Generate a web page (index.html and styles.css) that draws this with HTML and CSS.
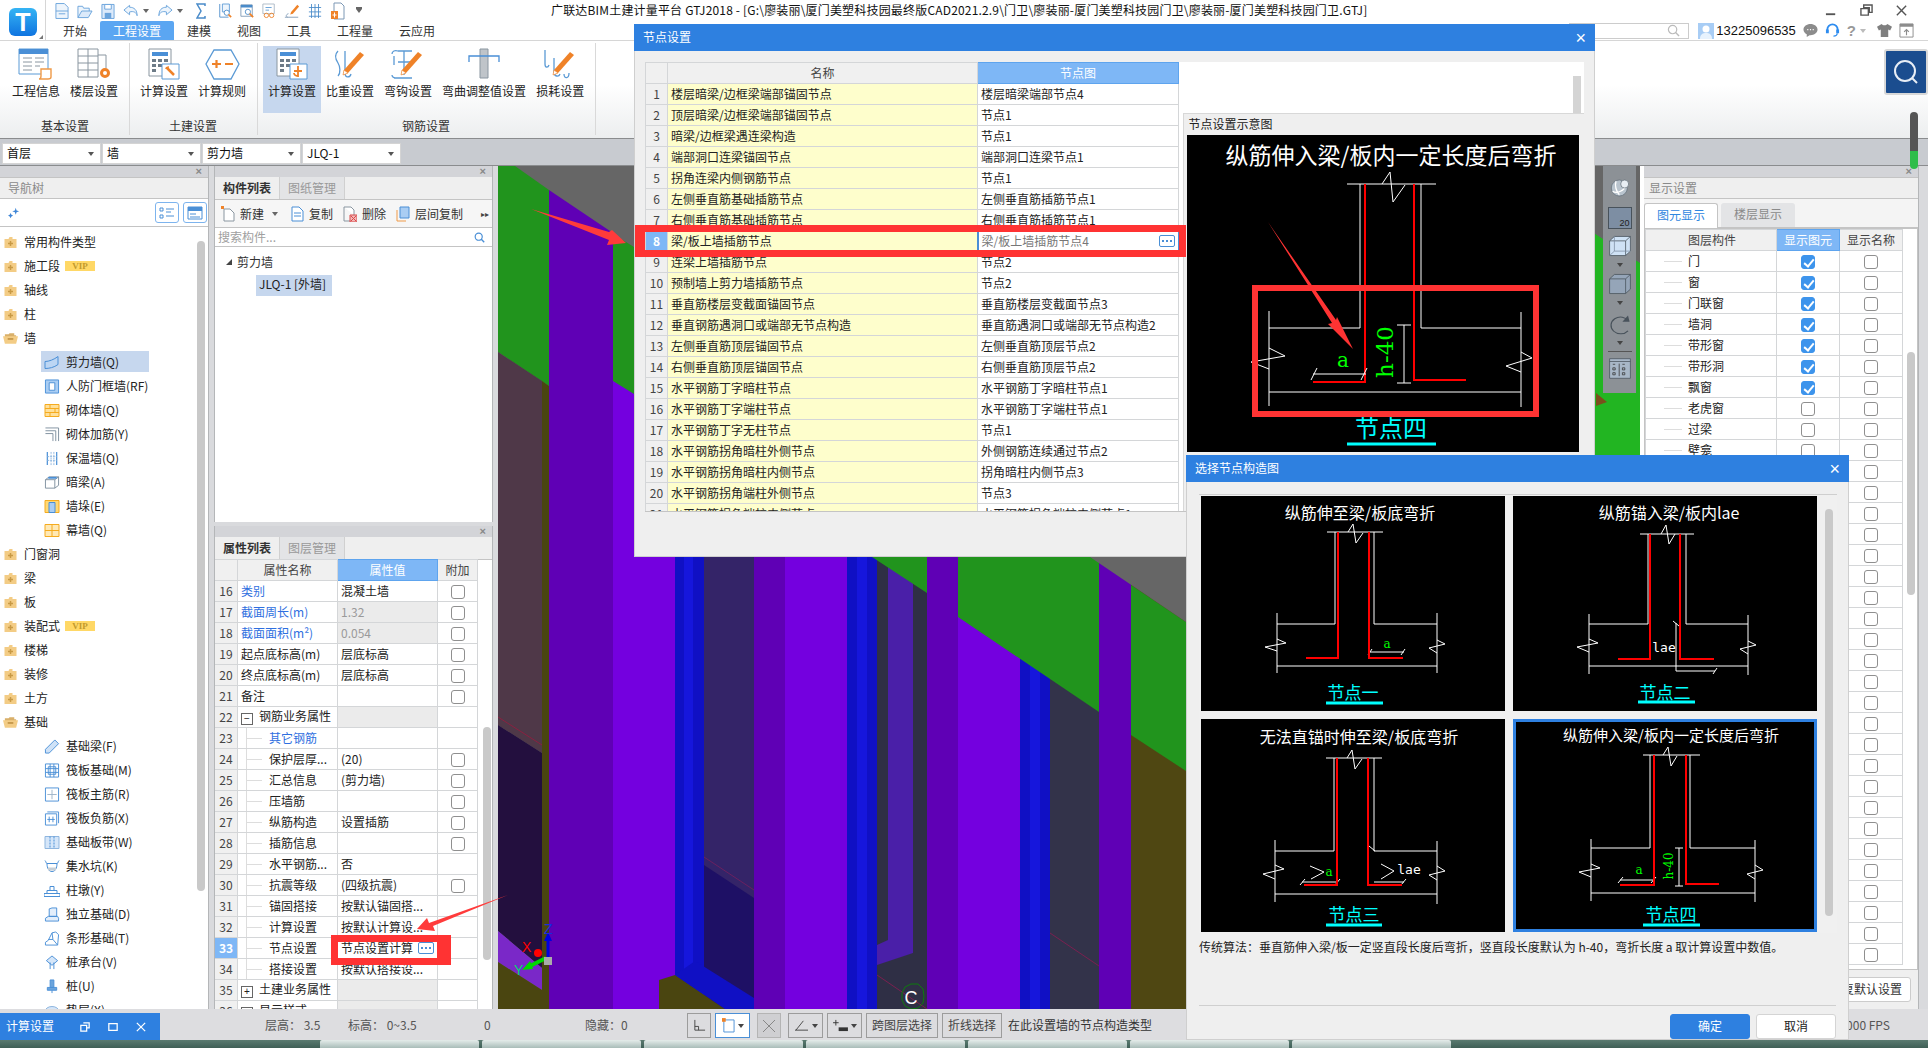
FILE: index.html

```html
<!DOCTYPE html>
<html lang="zh">
<head>
    <meta charset="utf-8">
    <title>广联达BIM土建计量平台 GTJ2018</title>
    <link rel="stylesheet" href="styles.css">
</head>
<body>

<svg class="sprite" width="0" height="0">
    <symbol id="folder" viewBox="0 0 14 13"><path d="M1 3h4l1-2h3v2h4v9H1z" fill="#f3cc85"/><path d="M7 5v5M4.500 7.500h5" stroke="#c99a45" stroke-width="1.500"/></symbol>
    <symbol id="folder-open" viewBox="0 0 16 13"><path d="M2 2h4l1-1h5v2h2v2H2z" fill="#d9b06a"/><path d="M0 4h16l-2 8H2z" fill="#f3cc85"/><path d="M5 7h6" stroke="#b98a3a" stroke-width="1.500"/></symbol>
    <symbol id="pencil" viewBox="0 0 34 32"><path d="M27 4l4 3-16 18-5 2 1-5z" fill="#ef8228"/><path d="M10 27l1-5 4 3z" fill="#fff" stroke="#ef8228" stroke-width=".6"/></symbol>
    <symbol id="wall-hook" viewBox="0 0 34 32"><path d="M5 3c-4 4-2 9 0 12s3 10 0 13M12 3v22c0 5 5 5 6 1" fill="none" stroke="#5b9ad5" stroke-width="1.300"/></symbol>
</svg>

<div class="app">
    <div class="top">
        <div class="logo-cell">
            <div class="logo">T</div>
            <i class="logo-corner"></i>
        </div>
        <div class="top-right">
            <div class="titlebar">
                <div class="quick">
                    <svg class="q" viewBox="0 0 15 18"><path d="M1 1h9l4 4v12H1z" fill="#eef5fc" stroke="#6ba4dc"/><path d="M1 9h13M4 12h7" stroke="#6ba4dc"/></svg>
                    <svg class="q qw" viewBox="0 0 17 18"><path d="M1 16V4h5l1 2h6v3" fill="#eef5fc" stroke="#6ba4dc"/><path d="M1 16l4-7h11l-4 7z" fill="#dceafa" stroke="#6ba4dc"/></svg>
                    <svg class="q" viewBox="0 0 15 18"><path d="M1 2h13v15H1z" fill="#dceafa" stroke="#6ba4dc"/><path d="M4 2h7v5H4z" fill="#fff" stroke="#6ba4dc"/><path d="M4 11h7v6H4z" fill="#6ba4dc"/></svg>
                    <svg class="q qw" viewBox="0 0 17 18"><path d="M7 3L1 8l6 5v-3c4-1 7 0 8 4 0-6-3-9-8-9z" fill="#eef5fc" stroke="#6ba4dc"/></svg>
                    <i class="caret"></i>
                    <svg class="q qw" viewBox="0 0 17 18"><path d="M10 3l6 5-6 5v-3c-4-1-7 0-8 4 0-6 3-9 8-9z" fill="#eef5fc" stroke="#6ba4dc"/></svg>
                    <i class="caret"></i>
                    <svg class="q qs" viewBox="0 0 10 18"><path d="M9 4V2H1l4 7-4 7h8v-2" fill="none" stroke="#4a8bc9" stroke-width="1.500"/></svg>
                    <svg class="q" viewBox="0 0 16 18"><path d="M2 1v15h10" fill="none" stroke="#4a8bc9"/><path d="M5 1h8v9H5z" fill="#eef5fc" stroke="#5b9ad5"/><circle cx="10" cy="11" r="3" fill="#fff" stroke="#4a8bc9"/><path d="M12 13l3 3" stroke="#ef8228" stroke-width="2"/></svg>
                    <svg class="q" viewBox="0 0 16 18"><path d="M1 2h13v13H1z" fill="#fff" stroke="#7d98b5"/><path d="M1 2h13v3H1z" fill="#4a8bc9"/><circle cx="9" cy="10" r="3" fill="#fff" stroke="#4a8bc9"/><path d="M11 12l4 4" stroke="#ef8228" stroke-width="2"/></svg>
                    <svg class="q" viewBox="0 0 16 18"><path d="M1 1h13v11H1z" fill="#fff" stroke="#a8b6c2"/><path d="M4 5h7M4 8h4" stroke="#5b9ad5"/><circle cx="5" cy="14" r="2.500" fill="none" stroke="#ef8228"/><circle cx="11" cy="14" r="2.500" fill="none" stroke="#ef8228"/></svg>
                    <svg class="q qw" viewBox="0 0 18 18"><path d="M8 10l7-8 2 2-7 8-3 1z" fill="#ef8228"/><path d="M1 16h15" stroke="#7d98b5"/><path d="M5 12c-3 1-3 3-1 4" fill="none" stroke="#7d98b5"/></svg>
                    <svg class="q" viewBox="0 0 16 18"><path d="M1 5h14M1 10h14M1 15h14M4 1v16M8 1v16M12 1v16" stroke="#4a8bc9" fill="none"/></svg>
                    <svg class="q qn" viewBox="0 0 14 18"><path d="M3 1h7l3 3v13H3z" fill="#fff" stroke="#7d98b5"/><path d="M0 9h7v8H0z" fill="#ef8228"/><path d="M3.500 10.500v5M1.500 13h4" stroke="#fff"/></svg>
                    <i class="caret caret-line"></i>
                </div>
                <div class="title-text">广联达BIM土建计量平台 GTJ2018 - [G:\廖装丽\厦门美塑科技园最终版CAD2021.2.9\门卫\廖装丽-厦门美塑科技园门卫\廖装丽-厦门美塑科技园门卫.GTJ]</div>
                <div class="win-btns">
                    <svg viewBox="0 0 14 14"><path d="M1 10h10v2H1z" fill="#555"/></svg>
                    <svg viewBox="0 0 14 14"><path d="M4 1h9v8H10V4H4z" fill="none" stroke="#555" stroke-width="1.500"/><path d="M1 5h8v7H1z" fill="none" stroke="#555" stroke-width="1.500"/></svg>
                    <svg viewBox="0 0 14 14"><path d="M2 2l10 10M12 2L2 12" stroke="#555" stroke-width="1.500"/></svg>
                </div>
            </div>
            <nav class="menu">
                <span>开始</span>
                <span class="active">工程设置</span>
                <span>建模</span>
                <span>视图</span>
                <span>工具</span>
                <span>工程量</span>
                <span>云应用</span>
                <div class="user-row">
                    <div class="help-search">
                        <svg viewBox="0 0 14 14" width="13" height="13"><circle cx="6" cy="6" r="4.500" fill="none" stroke="#bbb" stroke-width="1.300"/><path d="M9 9l4 4" stroke="#bbb" stroke-width="1.500"/></svg>
                    </div>
                    <svg class="avatar" viewBox="0 0 16 16"><path d="M0 0h16v16H0z" fill="#a8cdf5"/><circle cx="8" cy="6" r="3.500" fill="#fff"/><path d="M2 16c0-5 3-6 6-6s6 1 6 6z" fill="#e7f2fd"/></svg>
                    <span class="phone">13225096535</span>
                    <svg class="u-icon" viewBox="0 0 16 16"><path d="M8 1c4 0 7.500 2.500 7.500 6S12 13 8 13H7l-3 2v-3C2 11 .5 9.500.5 7 .5 3.500 4 1 8 1z" fill="#8c8c8c"/><path d="M4.500 7h1.200M7.400 7h1.200M10.300 7h1.200" stroke="#fff" stroke-width="1.200"/></svg>
                    <svg class="u-icon" viewBox="0 0 16 16"><path d="M2.500 10V7a5.500 5.500 0 0111 0v3" fill="none" stroke="#2d8cf0" stroke-width="2"/><path d="M1 7h3v4H1zM12 7h3v4h-3z" fill="#2d8cf0"/><path d="M13 11c0 2-2 3-4 3" fill="none" stroke="#2d8cf0" stroke-width="1.300"/></svg>
                    <span class="help-mark">?</span><i class="caret caret-pale"></i>
                    <svg class="u-icon" viewBox="0 0 16 16"><path d="M5 1L0 4l2 4 2-1v8h8V7l2 1 2-4-5-3c-1 2-5 2-6 0z" fill="#7f7f7f"/></svg>
                    <svg class="u-icon" viewBox="0 0 16 16"><path d="M1 1h14v14H1z" fill="#fff" stroke="#8c8c8c"/><path d="M1 1h14v3H1z" fill="#8c8c8c"/><path d="M8 13V7M5.500 9.500L8 7l2.500 2.500" fill="none" stroke="#8c8c8c" stroke-width="1.200"/></svg>
                </div>
            </nav>
        </div>
    </div>

    <div class="ribbon">
        <section class="rgroup">
            <div class="ritems">
                <div class="ritem">
                    <svg viewBox="0 0 36 32"><path d="M1 1h29v25H1z" fill="#fff" stroke="#5b9ad5"/><path d="M1 1h29v5H1z" fill="#4a8fd6"/><path d="M5 10h9M5 14h9M5 18h9M5 22h9M17 10h9M17 14h9M17 18h5" stroke="#8a96a0"/><path d="M23 21h10v8c0 2-2 2-3 2h-9c1 0 2-1 2-3z" fill="#fff" stroke="#ef9a48" stroke-width="1.400"/></svg>
                    <span>工程信息</span>
                </div>
                <div class="ritem">
                    <svg viewBox="0 0 36 32"><path d="M2 1h20v28H2zM2 8h20M2 15h20M2 22h20M12 1v28" fill="#fff" stroke="#8a96a0"/><path d="M22 7h8v13" fill="none" stroke="#8a96a0"/><circle cx="29" cy="25" r="3.500" fill="#fff" stroke="#ef8228" stroke-width="3"/></svg>
                    <span>楼层设置</span>
                </div>
            </div>
            <div class="rlabel">基本设置</div>
        </section>
        <section class="rgroup">
            <div class="ritems">
                <div class="ritem">
                    <svg viewBox="0 0 36 32"><path d="M3 1h22v27H3z" fill="#fff" stroke="#8a96a0"/><path d="M6 4h16v4H6z" fill="#4a8fd6"/><path d="M6 11h4v3H6zM12 11h4v3h-4zM18 11h4v3h-4zM6 16h4v3H6zM12 16h4v3h-4zM6 21h4v3H6z" fill="#6d7b87"/><path d="M16 16h17v15H16z" fill="#fff" stroke="#5b9ad5"/><path d="M21 20l7 7" stroke="#ef8228" stroke-width="2.500"/><path d="M20 21c0-2 2-2 3-2" stroke="#ef8228" fill="none" stroke-width="1.500"/></svg>
                    <span>计算设置</span>
                </div>
                <div class="ritem">
                    <svg viewBox="0 0 36 32"><path d="M10 2h17l8 14-8 15H10L2 16z" fill="#fff" stroke="#5b9ad5" stroke-width="1.300"/><path d="M8 16h9M12.500 12v8M21 16h8" stroke="#ef8228" stroke-width="2.200"/></svg>
                    <span>计算规则</span>
                </div>
            </div>
            <div class="rlabel">土建设置</div>
        </section>
        <section class="rgroup">
            <div class="ritems">
                <div class="ritem selected">
                    <svg viewBox="0 0 36 32"><path d="M3 1h22v27H3z" fill="#fff" stroke="#8a96a0"/><path d="M6 4h16v4H6z" fill="#4a8fd6"/><path d="M6 11h4v3H6zM12 11h4v3h-4zM18 11h4v3h-4zM6 16h4v3H6zM12 16h4v3h-4zM6 21h4v3H6z" fill="#6d7b87"/><path d="M16 16h17v15H16z" fill="#fff" stroke="#5b9ad5"/><path d="M24 18v10c-3 0-4-2-4-3M20 23h8" fill="none" stroke="#ef8228" stroke-width="1.800"/></svg>
                    <span>计算设置</span>
                </div>
                <div class="ritem">
                    <svg viewBox="0 0 36 32"><use href="#wall-hook"/><use href="#pencil"/></svg>
                    <span>比重设置</span>
                </div>
                <div class="ritem">
                    <svg viewBox="0 0 36 32"><path d="M2 6c0-3 3-4 6-3h14M4 30h18M14 3v24M8 14h14M2 27c0 3 3 3 5 3M4 17V8" fill="none" stroke="#5b9ad5" stroke-width="1.300"/><use href="#pencil"/></svg>
                    <span>弯钩设置</span>
                </div>
                <div class="ritem">
                    <svg viewBox="0 0 36 32"><path d="M14 1h8v29h-8z" fill="#bfc4c9" stroke="#8a96a0"/><path d="M3 14V8h30v6" fill="none" stroke="#4a8fd6" stroke-width="1.300"/></svg>
                    <span>弯曲调整值设置</span>
                </div>
                <div class="ritem">
                    <svg viewBox="0 0 36 32"><path d="M3 2v14c0 4 3 4 4 1M12 10v14c0 5 5 5 6 2M22 26c0 5 5 5 5-1" fill="none" stroke="#5b9ad5" stroke-width="1.300"/><use href="#pencil"/></svg>
                    <span>损耗设置</span>
                </div>
            </div>
            <div class="rlabel">钢筋设置</div>
        </section>
        <div class="search-btn">
            <svg viewBox="0 0 26 26" width="26" height="26"><circle cx="12" cy="12" r="10" fill="none" stroke="#e8eef6" stroke-width="2"/><path d="M19 19l5 5" stroke="#e8eef6" stroke-width="2"/></svg>
        </div>
    </div>

    <div class="combo-bar">
        <div class="combo">首层</div>
        <div class="combo">墙</div>
        <div class="combo">剪力墙</div>
        <div class="combo">JLQ-1</div>
        <div class="level-meter"></div>
    </div>

    <main class="workspace">
        <aside class="panel nav-panel">
            <div class="panel-strip">×</div>
            <div class="panel-title">导航树</div>
            <div class="nav-tools">
                <svg class="sparkle" viewBox="0 0 14 14"><path d="M9 1l1 3 3 1-3 1-1 3-1-3-3-1 3-1zM3 7l1 2 2 1-2 1-1 2-1-2-2-1 2-1z" fill="#3f86d6"/></svg>
                <div class="tool-box">
                    <svg viewBox="0 0 16 14"><path d="M1 2h3v3H1zM1 9h3v3H1z" fill="none" stroke="#4a8fd6"/><path d="M7 3h8M7 6h5M7 10h8" stroke="#4a8fd6"/></svg>
                </div>
                <div class="tool-box">
                    <svg viewBox="0 0 16 14"><path d="M1 1h14v12H1z" fill="#fff" stroke="#4a8fd6"/><path d="M1 1h14v4H1z" fill="#4a8fd6"/><path d="M3 8h6M3 11h10" stroke="#4a8fd6"/></svg>
                </div>
            </div>
            <div class="tree-wrap">
                <ul class="nav-tree">
                    <li><svg class="fi"><use href="#folder"/></svg>常用构件类型</li>
                    <li><svg class="fi"><use href="#folder"/></svg>施工段<b class="vip">VIP</b></li>
                    <li><svg class="fi"><use href="#folder"/></svg>轴线</li>
                    <li><svg class="fi"><use href="#folder"/></svg>柱</li>
                    <li><svg class="fi"><use href="#folder-open"/></svg>墙</li>
                    <li class="child picked"><svg class="ci" viewBox="0 0 16 14"><path d="M1 6c4 0 9-2 13-5v8c-4 3-9 4-13 4z" fill="#bcd6f4" stroke="#4a8fd6"/></svg>剪力墙(Q)</li>
                    <li class="child"><svg class="ci" viewBox="0 0 16 16"><path d="M1 1h14v14H1z" fill="#a9cdf3" stroke="#4a8fd6"/><path d="M5 4h6v8H5z" fill="#fff" stroke="#4a8fd6"/></svg>人防门框墙(RF)</li>
                    <li class="child"><svg class="ci" viewBox="0 0 16 14"><path d="M1 1h14v12H1z" fill="#ffe09a" stroke="#f5ab1f"/><path d="M1 5h14M1 9h14M6 1v4M11 5v4M6 9v4" stroke="#f5ab1f"/></svg>砌体墙(Q)</li>
                    <li class="child"><svg class="ci" viewBox="0 0 16 16"><path d="M1 1h14v14M1 4h11v11M1 7h8v8" fill="none" stroke="#7e8f9e"/></svg>砌体加筋(Y)</li>
                    <li class="child"><svg class="ci" viewBox="0 0 16 16"><path d="M3 1v14M13 1v14" stroke="#4a8fd6" stroke-width="1.300"/><path d="M7 1v14M10 1v14M3 6h10M3 10h10" stroke="#8fb6df" stroke-dasharray="2 1"/></svg>保温墙(Q)</li>
                    <li class="child"><svg class="ci" viewBox="0 0 16 16"><path d="M1 5l4-3h10v9l-4 3H1z" fill="#fff" stroke="#7e8f9e"/><path d="M1 5h10v9M11 5l4-3" fill="none" stroke="#7e8f9e"/><path d="M4 3h9" stroke="#4a8fd6" stroke-width="2"/></svg>暗梁(A)</li>
                    <li class="child"><svg class="ci" viewBox="0 0 16 14"><path d="M1 1h14v12H1z" fill="#ffd874" stroke="#f5ab1f"/><path d="M5 3h6v10H5z" fill="#a9cdf3" stroke="#4a8fd6"/></svg>墙垛(E)</li>
                    <li class="child"><svg class="ci" viewBox="0 0 16 14"><path d="M1 1h14v12H1z" fill="#ffe9b5" stroke="#f5ab1f"/><path d="M1 7h14M8 1v12" stroke="#f5ab1f"/></svg>幕墙(Q)</li>
                    <li><svg class="fi"><use href="#folder"/></svg>门窗洞</li>
                    <li><svg class="fi"><use href="#folder"/></svg>梁</li>
                    <li><svg class="fi"><use href="#folder"/></svg>板</li>
                    <li><svg class="fi"><use href="#folder"/></svg>装配式<b class="vip">VIP</b></li>
                    <li><svg class="fi"><use href="#folder"/></svg>楼梯</li>
                    <li><svg class="fi"><use href="#folder"/></svg>装修</li>
                    <li><svg class="fi"><use href="#folder"/></svg>土方</li>
                    <li><svg class="fi"><use href="#folder-open"/></svg>基础</li>
                    <li class="child"><svg class="ci" viewBox="0 0 16 16"><path d="M1 11L11 1l4 4L5 15H1z" fill="#cfe2f7" stroke="#4a8fd6"/></svg>基础梁(F)</li>
                    <li class="child"><svg class="ci" viewBox="0 0 16 16"><path d="M1 1h14v14H1zM4 4h8v8H4zM1 6h14M1 10h14M6 1v14M10 1v14" fill="none" stroke="#4a8fd6"/></svg>筏板基础(M)</li>
                    <li class="child"><svg class="ci" viewBox="0 0 16 16"><path d="M1 1h14v14H1z" fill="#fff" stroke="#4a8fd6"/><path d="M8 3v10M3 8h10" stroke="#9eb4c9"/></svg>筏板主筋(R)</li>
                    <li class="child"><svg class="ci" viewBox="0 0 16 16"><path d="M3 1h12v12" fill="none" stroke="#4a8fd6"/><path d="M1 3h12v12H1z" fill="#fff" stroke="#4a8fd6"/><path d="M5 6v6M9 6v6M3 9h8" stroke="#4a8fd6"/></svg>筏板负筋(X)</li>
                    <li class="child"><svg class="ci" viewBox="0 0 16 14"><path d="M1 1h14v12H1z" fill="#d5e6f9" stroke="#8fb6df"/><path d="M6 1v12M10 1v12" stroke="#4a8fd6" stroke-dasharray="2 1"/></svg>基础板带(W)</li>
                    <li class="child"><svg class="ci" viewBox="0 0 16 14"><path d="M1 1c1 1 1 3 2 3h10c1 0 1-2 2-3M3 4c0 5 2 8 5 8s5-3 5-8" fill="none" stroke="#4a8fd6"/><path d="M4 8h8v3H4z" fill="#c7cfd6"/></svg>集水坑(K)</li>
                    <li class="child"><svg class="ci" viewBox="0 0 16 14"><path d="M0 13V10h16v3zM3 10V7h10v3zM6 7V3h4v4z" fill="#fff" stroke="#4a8fd6"/></svg>柱墩(Y)</li>
                    <li class="child"><svg class="ci" viewBox="0 0 16 16"><path d="M5 10V2l3-1h5v9zM1 15v-3l3-2h10l1 2v3z" fill="#e3eefb" stroke="#4a8fd6"/></svg>独立基础(D)</li>
                    <li class="child"><svg class="ci" viewBox="0 0 16 16"><path d="M1 15v-3l3-2 4-8 4-1 3 3-1 11z" fill="#fff" stroke="#4a8fd6"/><path d="M8 2l1 7H4M9 9l5 6" fill="none" stroke="#4a8fd6"/></svg>条形基础(T)</li>
                    <li class="child"><svg class="ci" viewBox="0 0 16 16"><path d="M8 1l6 5-6 5-6-5z" fill="#d5e6f9" stroke="#4a8fd6"/><path d="M6 8v7M10 8v7" stroke="#4a8fd6"/></svg>桩承台(V)</li>
                    <li class="child"><svg class="ci" viewBox="0 0 16 16"><path d="M6 1h4v8H6zM3 9h10v3H3zM8 12v3" fill="#6ba4dc" stroke="#4a8fd6"/></svg>桩(U)</li>
                    <li class="child"><svg class="ci" viewBox="0 0 16 14"><ellipse cx="8" cy="8" rx="7" ry="5" fill="#d5e6f9" stroke="#8fb6df"/></svg>垫层(X)</li>
                </ul>
                <div class="scroll nav-scroll"></div>
            </div>
        </aside>

        <div class="mid-col">
            <section class="panel comp-panel">
                <div class="panel-strip">×</div>
                <div class="tabs">
                    <span class="tab on">构件列表</span>
                    <span class="tab">图纸管理</span>
                </div>
                <div class="comp-tools">
                    <svg viewBox="0 0 14 16"><path d="M3 3h6l4 4v8H3z" fill="#fff" stroke="#8a96a0"/><path d="M0 0h3v3H0z" fill="#ef8228"/></svg><span>新建</span><i class="caret"></i>
                    <svg viewBox="0 0 14 16"><path d="M2 1h7l4 4v10H2z" fill="#fff" stroke="#4a8fd6"/><path d="M4 7h7M4 10h7" stroke="#4a8fd6"/></svg><span>复制</span>
                    <svg viewBox="0 0 14 16"><path d="M1 1h7l3 3v5" fill="#fff" stroke="#8a96a0"/><path d="M1 1v14h6" fill="none" stroke="#8a96a0"/><path d="M7 9h7v7H7z" fill="#f3b9b9" stroke="#d84a4a"/><path d="M8 10l5 5M13 10l-5 5" stroke="#d84a4a"/></svg><span>删除</span>
                    <svg viewBox="0 0 14 16"><path d="M4 1h9v11H4z" fill="#a9cdf3" stroke="#4a8fd6"/><path d="M1 4v11h9" fill="none" stroke="#ef9a48"/></svg><span>层间复制</span>
                    <span class="more">▸▸</span>
                </div>
                <div class="comp-search">
                    <span>搜索构件...</span>
                    <svg viewBox="0 0 14 14" width="11" height="11"><circle cx="6" cy="6" r="4.500" fill="none" stroke="#4a8fd6" stroke-width="1.500"/><path d="M9 9l4 4" stroke="#4a8fd6" stroke-width="1.800"/></svg>
                </div>
                <div class="comp-tree">
                    <div class="comp-root"><i class="tri"></i>剪力墙</div>
                    <div class="comp-leaf">JLQ-1 [外墙]</div>
                </div>
            </section>
            <section class="panel prop-panel">
                <div class="panel-strip">×</div>
                <div class="tabs">
                    <span class="tab on">属性列表</span>
                    <span class="tab">图层管理</span>
                </div>
                <div class="prop-body">
                    <table class="grid prop-grid">
                        <colgroup><col class="c-num"><col class="c-name"><col class="c-val"><col class="c-add"></colgroup>
                        <tr class="head"><th></th><th>属性名称</th><th class="hot">属性值</th><th>附加</th></tr>
                        <tr><td class="num">16</td><td class="blue">类别</td><td>混凝土墙</td><td class="mid"><i class="chk"></i></td></tr>
                        <tr><td class="num">17</td><td class="blue">截面周长(m)</td><td class="dim">1.32</td><td class="mid"><i class="chk"></i></td></tr>
                        <tr><td class="num">18</td><td class="blue">截面面积(m²)</td><td class="dim">0.054</td><td class="mid"><i class="chk"></i></td></tr>
                        <tr><td class="num">19</td><td>起点底标高(m)</td><td>层底标高</td><td class="mid"><i class="chk"></i></td></tr>
                        <tr><td class="num">20</td><td>终点底标高(m)</td><td>层底标高</td><td class="mid"><i class="chk"></i></td></tr>
                        <tr><td class="num">21</td><td>备注</td><td></td><td class="mid"><i class="chk"></i></td></tr>
                        <tr><td class="num">22</td><td><i class="fold">−</i>钢筋业务属性</td><td class="grey"></td><td></td></tr>
                        <tr><td class="num">23</td><td class="sub blue">其它钢筋</td><td></td><td></td></tr>
                        <tr><td class="num">24</td><td class="sub">保护层厚...</td><td>(20)</td><td class="mid"><i class="chk"></i></td></tr>
                        <tr><td class="num">25</td><td class="sub">汇总信息</td><td>(剪力墙)</td><td class="mid"><i class="chk"></i></td></tr>
                        <tr><td class="num">26</td><td class="sub">压墙筋</td><td></td><td class="mid"><i class="chk"></i></td></tr>
                        <tr><td class="num">27</td><td class="sub">纵筋构造</td><td>设置插筋</td><td class="mid"><i class="chk"></i></td></tr>
                        <tr><td class="num">28</td><td class="sub">插筋信息</td><td></td><td class="mid"><i class="chk"></i></td></tr>
                        <tr><td class="num">29</td><td class="sub">水平钢筋...</td><td>否</td><td></td></tr>
                        <tr><td class="num">30</td><td class="sub">抗震等级</td><td>(四级抗震)</td><td class="mid"><i class="chk"></i></td></tr>
                        <tr><td class="num">31</td><td class="sub">锚固搭接</td><td>按默认锚固搭...</td><td></td></tr>
                        <tr><td class="num">32</td><td class="sub">计算设置</td><td>按默认计算设...</td><td></td></tr>
                        <tr><td class="num cur">33</td><td class="sub">节点设置</td><td class="edit"><span>节点设置计算</span><i class="dots"></i></td><td></td></tr>
                        <tr><td class="num">34</td><td class="sub">搭接设置</td><td>按默认搭接设...</td><td></td></tr>
                        <tr><td class="num">35</td><td><i class="fold">+</i>土建业务属性</td><td class="grey"></td><td></td></tr>
                        <tr><td class="num">36</td><td><i class="fold">+</i>显示样式</td><td class="grey"></td><td></td></tr>
                    </table>
                    <div class="scroll prop-scroll"></div>
                </div>
            </section>
        </div>

        <div class="viewport">
            <svg class="scene" viewBox="498 166 1142 843">
                <path d="M498 166h1142v843H498z" fill="#666"/>
                <path d="M498 166h17l34 24v196l-51-34z" fill="#21941d"/>
                <path d="M498 352l44 29v372l-44-28z" fill="#4f3848"/>
                <path d="M498 725l44 28v215l-44-37z" fill="#230f3e"/>
                <path d="M498 931l44 37v22l-44-28z" fill="#7a28c8"/>
                <path d="M498 962l44 28v19h-44z" fill="#4a4510"/>
                <path d="M542 381l7 5v623h-7z" fill="#4a4510"/>
                <path d="M498 717l44 28" stroke="#8a2040" fill="none"/>
                <path d="M549 190l64 43v776h-64z" fill="#5f00b5"/>
                <path d="M613 381h62v628h-62z" fill="#7400df"/>
                <path d="M613 234l21 13v147l-21-13z" fill="#21941d"/>
                <path d="M675 380h29v629h-29z" fill="#1010c4"/>
                <path d="M684 380h9v595h-9z" fill="#1616dc"/>
                <path d="M704 380h50v629h-50z" fill="#342468"/>
                <path d="M704 865l50 33v111h-50z" fill="#1e1065"/>
                <path d="M704 857l50 33" stroke="#6a2060" fill="none"/>
                <path d="M659 980l16-5 50 34h-66z" fill="#4a4510"/>
                <path d="M675 975l20-14 59 37v11h-29z" fill="#1010c4"/>
                <path d="M754 380h31v629h-31z" fill="#5f00b5"/>
                <path d="M785 380h62v629h-62z" fill="#7400df"/>
                <path d="M847 380h30v629h-30z" fill="#1010c4"/>
                <path d="M857 380h10v629h-10z" fill="#1616dc"/>
                <path d="M877 380h50v629h-50z" fill="#2f2f45"/>
                <path d="M877 945l11-5V380h25v573l-36 12z" fill="#4a1fa8"/>
                <path d="M877 975l50 34" stroke="#7a2050" fill="none"/>
                <path d="M872 557h55v36z" fill="#21941d"/>
                <path d="M927 380h31v629h-31z" fill="#5f00b5"/>
                <path d="M958 380h62v629h-62z" fill="#7400df"/>
                <path d="M1020 380h30v629h-30z" fill="#1010c4"/>
                <path d="M1030 380h10v629h-10z" fill="#1616dc"/>
                <path d="M1050 380h49v629h-49z" fill="#33334a"/>
                <path d="M1050 933l49 33" stroke="#7a2050" fill="none"/>
                <path d="M958 557h141v155l-141-95z" fill="#21941d"/>
                <path d="M1099 380h32v629h-32z" fill="#5f00b5"/>
                <path d="M1131 380h55v629h-55z" fill="#4f4712"/>
                <path d="M1131 585l55 37v149l-55-36z" fill="#21941d"/>
                <path d="M1090 557h96v65z" fill="#666"/>
                <path d="M1583 226l57 37v200h-57z" fill="#22b522"/>
                <path d="M1596 393l11 9-11 4z" fill="#7a4f1c"/>
                <path d="M531 209l78 23 3-2 14 13-19 2 2-5z" fill="#ff3b3b"/>
                <path d="M548 958v-18" stroke="#0000e0" stroke-width="3"/>
                <path d="M548 932l-4 9h8z" fill="#0000e0"/>
                <path d="M546 958l-16 8" stroke="#00d800" stroke-width="4"/>
                <path d="M522 970l8-9 3 8z" fill="#00d800"/>
                <circle cx="538" cy="953" r="4" fill="#f00"/>
                <path d="M544 957h8v8h-8z" fill="#aaa"/>
                <text class="axis-x" x="522" y="952">X</text>
                <text class="axis-y" x="514" y="975">Y</text>
                <text class="axis-z" x="544" y="934">Z</text>
                <path d="M905 987l6-3 7 0 5 5 1 7-1 7-5 5-7 1-6-3-3-6v-7z" fill="none" stroke="#0f7a0f"/>
                <text class="axis-c" x="911" y="1004" text-anchor="middle">C</text>
            </svg>
            <div class="view-tools">
                <svg class="vt-globe" viewBox="0 0 30 30"><circle cx="14" cy="15" r="12" fill="#b9c4ce" stroke="#5e6a74"/><path d="M4 20c5 4 17 0 21-10M9 5c-2 6 0 15 5 20" fill="none" stroke="#fff" stroke-width="2"/><circle cx="22" cy="9" r="6" fill="#e8eef4" stroke="#5e6a74"/></svg>
                <div class="mode-2d">20</div>
                <svg viewBox="0 0 30 30" preserveAspectRatio="none"><path d="M2 8l6-6h20v20l-6 6H2z" fill="#cfe2f5" stroke="#48525b"/><path d="M2 8h20v20M22 8l6-6" fill="none" stroke="#48525b"/><path d="M8 2v20h20M8 22l-6 6" fill="none" stroke="#7d8ea3"/></svg>
                <i class="caret caret-dark"></i>
                <svg viewBox="0 0 30 30" preserveAspectRatio="none"><path d="M2 8l6-6h20v20l-6 6H2z" fill="#95a5b8" stroke="#48525b"/><path d="M2 8h20v20M22 8l6-6" fill="none" stroke="#48525b"/></svg>
                <i class="caret caret-dark"></i>
                <svg class="vt-rot" viewBox="0 0 30 30" preserveAspectRatio="none"><path d="M26 10a12 12 0 10-1 14" fill="none" stroke="#48525b" stroke-width="1.500"/><path d="M25 2l2 9-9 0z" fill="#48525b"/></svg>
                <i class="caret caret-dark"></i>
                <i class="tool-line"></i>
                <svg class="vt-calc" viewBox="0 0 30 30" preserveAspectRatio="none"><path d="M2 1h26v28H2z" fill="#a8b7c7" stroke="#48525b"/><path d="M2 5h26" stroke="#48525b"/><path d="M6 9h3M6 14h3v3H6zM6 21h3v3H6zM18 9h3M18 14h3v3h-3zM18 21h3v3h-3zM14 8v18" fill="none" stroke="#333"/></svg>
            </div>
        </div>

        <aside class="panel show-panel">
            <div class="panel-strip">×</div>
            <div class="panel-title">显示设置</div>
            <div class="show-tabs">
                <span class="show-tab on">图元显示</span>
                <span class="show-tab">楼层显示</span>
            </div>
            <div class="show-body">
                <table class="grid show-grid">
                    <colgroup><col class="s-name"><col class="s-col"><col class="s-col"></colgroup>
                    <tr class="head"><th class="s-head">图层构件</th><th class="hot">显示图元</th><th>显示名称</th></tr>
                    <tr><td class="leaf">门</td><td class="mid"><i class="chk on"></i></td><td class="mid"><i class="chk"></i></td></tr>
                    <tr><td class="leaf">窗</td><td class="mid"><i class="chk on"></i></td><td class="mid"><i class="chk"></i></td></tr>
                    <tr><td class="leaf">门联窗</td><td class="mid"><i class="chk on"></i></td><td class="mid"><i class="chk"></i></td></tr>
                    <tr><td class="leaf">墙洞</td><td class="mid"><i class="chk on"></i></td><td class="mid"><i class="chk"></i></td></tr>
                    <tr><td class="leaf">带形窗</td><td class="mid"><i class="chk on"></i></td><td class="mid"><i class="chk"></i></td></tr>
                    <tr><td class="leaf">带形洞</td><td class="mid"><i class="chk on"></i></td><td class="mid"><i class="chk"></i></td></tr>
                    <tr><td class="leaf">飘窗</td><td class="mid"><i class="chk on"></i></td><td class="mid"><i class="chk"></i></td></tr>
                    <tr><td class="leaf">老虎窗</td><td class="mid"><i class="chk"></i></td><td class="mid"><i class="chk"></i></td></tr>
                    <tr><td class="leaf">过梁</td><td class="mid"><i class="chk"></i></td><td class="mid"><i class="chk"></i></td></tr>
                    <tr><td class="leaf">壁龛</td><td class="mid"><i class="chk"></i></td><td class="mid"><i class="chk"></i></td></tr>
                    <tr><td></td><td></td><td class="mid"><i class="chk"></i></td></tr>
                    <tr><td></td><td></td><td class="mid"><i class="chk"></i></td></tr>
                    <tr><td></td><td></td><td class="mid"><i class="chk"></i></td></tr>
                    <tr><td></td><td></td><td class="mid"><i class="chk"></i></td></tr>
                    <tr><td></td><td></td><td class="mid"><i class="chk"></i></td></tr>
                    <tr><td></td><td></td><td class="mid"><i class="chk"></i></td></tr>
                    <tr><td></td><td></td><td class="mid"><i class="chk"></i></td></tr>
                    <tr><td></td><td></td><td class="mid"><i class="chk"></i></td></tr>
                    <tr><td></td><td></td><td class="mid"><i class="chk"></i></td></tr>
                    <tr><td></td><td></td><td class="mid"><i class="chk"></i></td></tr>
                    <tr><td></td><td></td><td class="mid"><i class="chk"></i></td></tr>
                    <tr><td></td><td></td><td class="mid"><i class="chk"></i></td></tr>
                    <tr><td></td><td></td><td class="mid"><i class="chk"></i></td></tr>
                    <tr><td></td><td></td><td class="mid"><i class="chk"></i></td></tr>
                    <tr><td></td><td></td><td class="mid"><i class="chk"></i></td></tr>
                    <tr><td></td><td></td><td class="mid"><i class="chk"></i></td></tr>
                    <tr><td></td><td></td><td class="mid"><i class="chk"></i></td></tr>
                    <tr><td></td><td></td><td class="mid"><i class="chk"></i></td></tr>
                    <tr><td></td><td></td><td class="mid"><i class="chk"></i></td></tr>
                    <tr><td></td><td></td><td class="mid"><i class="chk"></i></td></tr>
                    <tr><td></td><td></td><td class="mid"><i class="chk"></i></td></tr>
                    <tr><td></td><td></td><td class="mid"><i class="chk"></i></td></tr>
                    <tr><td></td><td></td><td class="mid"><i class="chk"></i></td></tr>
                    <tr><td></td><td></td><td class="mid"><i class="chk"></i></td></tr>
                </table>
                <div class="scroll show-scroll"></div>
            </div>
            <div class="show-foot"><span class="reset-btn">恢复默认设置</span></div>
        </aside>
    </main>

    <footer class="status">
        <div class="calc-tab">
            <span>计算设置</span>
            <svg viewBox="0 0 12 12" width="10" height="10"><path d="M4 1h7v6H8M1 4h7v7H1z" fill="none" stroke="#fff" stroke-width="1.500"/></svg>
            <svg viewBox="0 0 12 12" width="10" height="10"><path d="M1 2h10v8H1z" fill="none" stroke="#fff" stroke-width="1.500"/></svg>
            <svg viewBox="0 0 12 12" width="10" height="10"><path d="M1 1l10 10M11 1L1 11" stroke="#fff" stroke-width="1.500"/></svg>
        </div>
        <span class="st st-h">层高： 3.5</span>
        <span class="st st-b">标高： 0~3.5</span>
        <span class="st st-0">0</span>
        <span class="st st-hide">隐藏：0</span>
        <div class="st-tools">
            <div class="st-btn w24"><svg viewBox="0 0 14 14" width="13" height="13"><path d="M2 1v11h11M2 8h4v4" fill="none" stroke="#444"/></svg></div>
            <div class="st-btn w35 lit"><svg viewBox="0 0 14 16" width="13" height="15"><path d="M2 2h11v13H2z" fill="#fff" stroke="#4a8fd6"/><path d="M0 0h4v4H0z" fill="#ef8228"/></svg><i class="caret caret-dark"></i></div>
            <div class="st-btn w24 off"><svg viewBox="0 0 14 14" width="14" height="14"><path d="M1 1l12 12M13 1L1 13" stroke="#888"/></svg></div>
            <div class="st-btn w35"><svg viewBox="0 0 16 14" width="15" height="13"><path d="M1 12h14M2 12l8-10" stroke="#444" fill="none"/></svg><i class="caret caret-dark"></i></div>
            <div class="st-btn w35"><svg viewBox="0 0 16 14" width="15" height="13"><path d="M3 1v6M0 4h6" stroke="#333"/><path d="M6 9h10v4H6z" fill="#333"/></svg><i class="caret caret-dark"></i></div>
            <div class="st-btn txt">跨图层选择</div>
            <div class="st-btn txt">折线选择</div>
        </div>
        <span class="st st-hint">在此设置墙的节点构造类型</span>
        <span class="st st-fps">1000 FPS</span>
    </footer>
    <div class="taskbar">
        <i></i><i></i><i></i><i></i><i></i><i></i><i></i>
    </div>
</div>

<!-- 节点设置 -->
<section class="dialog dlg-node">
    <div class="dlg-title"><span>节点设置</span><b>×</b></div>
    <div class="dlg-node-body">
        <table class="grid node-grid">
            <colgroup><col class="n-num"><col class="n-name"><col class="n-val"></colgroup>
            <tr class="head"><th></th><th>名称</th><th class="hot">节点图</th></tr>
            <tr><td class="num">1</td><td class="ye">楼层暗梁/边框梁端部锚固节点</td><td>楼层暗梁端部节点4</td></tr>
            <tr><td class="num">2</td><td class="ye">顶层暗梁/边框梁端部锚固节点</td><td>节点1</td></tr>
            <tr><td class="num">3</td><td class="ye">暗梁/边框梁遇连梁构造</td><td>节点1</td></tr>
            <tr><td class="num">4</td><td class="ye">端部洞口连梁锚固节点</td><td>端部洞口连梁节点1</td></tr>
            <tr><td class="num">5</td><td class="ye">拐角连梁内侧钢筋节点</td><td>节点1</td></tr>
            <tr><td class="num">6</td><td class="ye">左侧垂直筋基础插筋节点</td><td>左侧垂直筋插筋节点1</td></tr>
            <tr><td class="num">7</td><td class="ye">右侧垂直筋基础插筋节点</td><td>右侧垂直筋插筋节点1</td></tr>
            <tr><td class="num cur">8</td><td class="ye">梁/板上墙插筋节点</td><td class="edit node-edit"><span>梁/板上墙插筋节点4</span><i class="dots"></i></td></tr>
            <tr><td class="num">9</td><td class="ye">连梁上墙插筋节点</td><td>节点2</td></tr>
            <tr><td class="num">10</td><td class="ye">预制墙上剪力墙插筋节点</td><td>节点2</td></tr>
            <tr><td class="num">11</td><td class="ye">垂直筋楼层变截面锚固节点</td><td>垂直筋楼层变截面节点3</td></tr>
            <tr><td class="num">12</td><td class="ye">垂直钢筋遇洞口或端部无节点构造</td><td>垂直筋遇洞口或端部无节点构造2</td></tr>
            <tr><td class="num">13</td><td class="ye">左侧垂直筋顶层锚固节点</td><td>左侧垂直筋顶层节点2</td></tr>
            <tr><td class="num">14</td><td class="ye">右侧垂直筋顶层锚固节点</td><td>右侧垂直筋顶层节点2</td></tr>
            <tr><td class="num">15</td><td class="ye">水平钢筋丁字暗柱节点</td><td>水平钢筋丁字暗柱节点1</td></tr>
            <tr><td class="num">16</td><td class="ye">水平钢筋丁字端柱节点</td><td>水平钢筋丁字端柱节点1</td></tr>
            <tr><td class="num">17</td><td class="ye">水平钢筋丁字无柱节点</td><td>节点1</td></tr>
            <tr><td class="num">18</td><td class="ye">水平钢筋拐角暗柱外侧节点</td><td>外侧钢筋连续通过节点2</td></tr>
            <tr><td class="num">19</td><td class="ye">水平钢筋拐角暗柱内侧节点</td><td>拐角暗柱内侧节点3</td></tr>
            <tr><td class="num">20</td><td class="ye">水平钢筋拐角端柱外侧节点</td><td>节点3</td></tr>
            <tr><td class="num">21</td><td class="ye">水平钢筋拐角端柱内侧节点</td><td>水平钢筋拐角端柱内侧节点1</td></tr>
        </table>
        <div class="preview-col">
            <div class="preview-top"><div class="scroll preview-scroll"></div></div>
            <div class="preview-box">
                <div class="preview-title">节点设置示意图</div>
                <svg class="preview-cad" viewBox="0 0 392 317">
                    <text class="cad-title t-big" x="204" y="29" text-anchor="middle">纵筋伸入梁/板内一定长度后弯折</text>
                    <path class="cw" d="M160 49h89M173 49v144H82M234 49v144h100M82 176v95M334 177v95M82 257h252"/>
                    <path class="cw" d="M195 49l8-12 3 30 12-17M82 213l16 8-34 6 18 7M334 217l11 6-26 8 15 6"/>
                    <path class="cr" d="M178 49v198h-52M227 49v196h52"/>
                    <path class="cw" d="M126 239h53M130 233l-6 12M180 233l-6 12M217 190v58M210 190h14M210 248h14"/>
                    <text class="cad-dim" x="156" y="232" text-anchor="middle" font-size="20">a</text>
                    <text class="cad-dim" transform="translate(206 217) rotate(-90)" text-anchor="middle" font-size="23">h-40</text>
                    <text class="cad-cap" x="204" y="302" text-anchor="middle" font-size="24">节点四</text>
                    <path class="cu" d="M160 309h89"/>
                    <rect class="mark-box" x="68" y="153" width="281" height="126"/>
                    <path class="mark-arrow" d="M81 87l68 98 1-3 16 32-25-25 4-1z"/>
                </svg>
            </div>
        </div>
    </div>
    <div class="row-mark"></div>
</section>

<!-- 选择节点构造图 -->
<section class="dialog dlg-pick">
    <div class="dlg-title"><span>选择节点构造图</span><b>×</b></div>
    <div class="pick-frame">
        <div class="pick-grid">
            <svg class="card" viewBox="0 0 304 215">
                <text class="cad-title" x="159" y="23" text-anchor="middle">纵筋伸至梁/板底弯折</text>
                <path class="cw" d="M126 36h56M134 36v92H76M173 36v92h63M76 117v60M236 117v60M76 170h160"/>
                <path class="cw" d="M147 36l5-8 3 19 7-10M76 143l9 4-21 4 12 4M236 144l8 4-16 4 8 5M168 156h35M171 153l-4 6M204 153l-4 6"/>
                <path class="cr" d="M137 36v126h-32M168 36v126h34"/>
                <text class="cad-dim" x="186" y="152" text-anchor="middle" font-size="12">a</text>
                <text class="cad-cap" x="152" y="203" text-anchor="middle" font-size="17">节点一</text>
                <path class="cu" d="M125 207h57"/>
            </svg>
            <svg class="card" viewBox="0 0 304 215">
                <text class="cad-title" x="156" y="23" text-anchor="middle">纵筋锚入梁/板内lae</text>
                <path class="cw" d="M127 38h54M135 38v90H76M173 38v90h62M76 118v60M235 119v60M76 170h159"/>
                <path class="cw" d="M148 38l5-9 3 19 6-10M76 143l9 4-21 4 12 5M235 145l8 4-16 4 8 5M163 127v48h39M160 125l6 5M204 172l-4 6"/>
                <path class="cr" d="M137 38v125h-32M167 38v125h34"/>
                <text class="cad-lae" x="151" y="156" text-anchor="middle">lae</text>
                <text class="cad-cap" x="152" y="203" text-anchor="middle" font-size="17">节点二</text>
                <path class="cu" d="M125 206h57"/>
            </svg>
            <svg class="card" viewBox="0 0 304 213">
                <text class="cad-title" x="158" y="24" text-anchor="middle">无法直锚时伸至梁/板底弯折</text>
                <path class="cw" d="M125 39h56M133 39v93H74M173 39v93h63M74 121v62M236 122v63M74 175h162"/>
                <path class="cw" d="M146 39l5-8 3 19 7-10M74 146l9 4-21 5 12 5M236 147l8 5-16 4 8 5M109 147l14 6-13 7M180 145l13 7-13 8M101 163h36M104 160l-5 6M139 160l-5 6M173 163h30M205 160l-5 6M174 132l-6-5"/>
                <path class="cr" d="M136 39v127h-33M167 39v127h34"/>
                <text class="cad-dim" x="128" y="157" text-anchor="middle" font-size="12">a</text>
                <text class="cad-lae" x="208" y="155" text-anchor="middle">lae</text>
                <text class="cad-cap" x="153" y="202" text-anchor="middle" font-size="17">节点三</text>
                <path class="cu" d="M125 206h56"/>
            </svg>
            <svg class="card picked-card" viewBox="0 0 304 213">
                <text class="cad-title t-small" x="158" y="22" text-anchor="middle">纵筋伸入梁/板内一定长度后弯折</text>
                <path class="cw" d="M130 36h57M137 36v93H78M177 36v93h65M78 120v62M242 121v62M78 174h164"/>
                <path class="cw" d="M150 36l5-8 3 19 6-10M78 145l9 4-21 4 12 5M242 146l8 5-16 4 8 5M107 161h34M110 158l-5 6M143 158l-5 6M166 129v38M162 129h8M162 167h8"/>
                <path class="cr" d="M141 36v130h-34M173 36v129h33"/>
                <text class="cad-dim" x="126" y="155" text-anchor="middle" font-size="12">a</text>
                <text class="cad-dim" transform="translate(160 147) rotate(-90)" text-anchor="middle" font-size="12">h-40</text>
                <text class="cad-cap" x="158" y="202" text-anchor="middle" font-size="17">节点四</text>
                <path class="cu" d="M130 206h57"/>
            </svg>
        </div>
        <div class="scroll pick-scroll"></div>
    </div>
    <p class="pick-note">传统算法：垂直筋伸入梁/板一定竖直段长度后弯折，竖直段长度默认为 h-40，弯折长度 a 取计算设置中数值。</p>
    <div class="pick-foot">
        <button class="btn btn-ok">确定</button>
        <button class="btn">取消</button>
    </div>
</section>

<!-- annotations drawn over the screenshot -->
<div class="mark-prop"></div>
<svg class="mark-prop-arrow" viewBox="0 0 105 45"><path d="M98 5L19 33l-2-5-10 11 18 2-2-5z" fill="#ff3b3b"/></svg>

</body>
</html>
```

FILE: styles.css

```css
* { box-sizing: border-box; }

html, body {
    margin: 0;
    width: 1928px;
    height: 1048px;
    overflow: hidden;
}

body {
    position: relative;
    background: #fff;
    font: 12px/1.2 "Noto Sans CJK SC", "Liberation Sans", sans-serif;
    color: #222;
}

.sprite { position: absolute; }

.app {
    display: flex;
    flex-direction: column;
    height: 1048px;
}

/* title + menu */
.top {
    display: flex;
    height: 41px;
    border-bottom: 1px solid #d6d6d6;
}

.logo-cell {
    position: relative;
    width: 46px;
    padding: 8px 0 0 9px;
    border-right: 1px solid #d6d6d6;
}

.logo {
    width: 28px;
    height: 28px;
    border-radius: 6px;
    background: linear-gradient(#35b4f4, #0f74e0);
    color: #fff;
    font: bold 25px/28px "Liberation Sans", sans-serif;
    text-align: center;
}

.logo-corner {
    position: absolute;
    right: 2px;
    bottom: 1px;
    border-left: 4px solid transparent;
    border-bottom: 4px solid #777;
}

.top-right {
    flex: 1;
    display: flex;
    flex-direction: column;
}

.titlebar {
    display: flex;
    align-items: center;
    height: 21px;
}

.quick {
    display: flex;
    align-items: center;
    width: 505px;
    padding-left: 9px;
    gap: 8px;
}

.q { width: 14px; height: 18px; }
.qw { width: 16px; }
.qs { width: 10px; margin-left: 5px; margin-right: 4px; }
.qn { margin-left: 1px; }

.caret {
    display: inline-block;
    margin-left: -4px;
    border-left: 3px solid transparent;
    border-right: 3px solid transparent;
    border-top: 4px solid #666;
}

.caret-line { margin-left: 3px; box-shadow: 0 -2px 0 #666; }
.caret-pale { border-top-color: #bbb; margin-left: 2px; margin-right: 4px; }
.caret-dark { margin: 0; border-top-color: #444; }

.title-text {
    white-space: nowrap;
    font-size: 12px;
    letter-spacing: .18px;
    color: #111;
}

.win-btns {
    display: flex;
    margin-left: auto;
    margin-right: 20px;
    gap: 22px;
}

.win-btns svg { width: 13px; height: 13px; }

.menu {
    display: flex;
    align-items: stretch;
    height: 19px;
    padding-left: 4px;
}

.menu > span {
    padding: 0 13px;
    line-height: 19px;
    color: #333;
}

.menu > .active {
    background: #5ba6f2;
    color: #fff;
    border-radius: 2px 2px 0 0;
}

.user-row {
    display: flex;
    align-items: center;
    margin-left: auto;
    margin-right: 14px;
    gap: 7px;
}

.help-search {
    display: flex;
    align-items: center;
    justify-content: flex-end;
    width: 120px;
    height: 16px;
    margin-right: 2px;
    padding-right: 8px;
    border: 1px solid #ccc;
}

.avatar { width: 16px; height: 16px; margin-right: -5px; }
.phone { font: 13px "Liberation Sans", sans-serif; color: #111; }
.u-icon { width: 15px; height: 15px; }
.help-mark { color: #999; font: bold 15px "Liberation Sans", sans-serif; margin-right: -5px; }

/* ribbon */
.ribbon {
    position: relative;
    display: flex;
    height: 97px;
    padding-left: 7px;
    background: linear-gradient(#fff 45%, #eceeef);
}

.rgroup {
    display: flex;
    flex-direction: column;
    padding-right: 6px;
    margin-right: 5px;
    border-right: 1px solid #d9d9d9;
    margin-top: 2px;
    margin-bottom: 3px;
}

.ritems {
    display: flex;
    height: 67px;
    margin-top: 3px;
}

.ritem {
    display: flex;
    flex-direction: column;
    align-items: center;
    padding: 2px 5px 0;
}

.ritem svg { width: 36px; height: 32px; }

.ritem span {
    margin-top: 4px;
    white-space: nowrap;
    color: #222;
}

.ritem.selected { background: #c6d7ee; }

.rlabel {
    margin-top: 6px;
    text-align: center;
    color: #333;
}

.search-btn {
    position: absolute;
    right: 0;
    top: 8px;
    display: flex;
    align-items: center;
    justify-content: center;
    width: 44px;
    height: 46px;
    border: 2px solid #d8d8d8;
    border-radius: 3px;
    background: #1b4d8f;
}

/* floor combos */
.combo-bar {
    display: flex;
    gap: 1px;
    height: 28px;
    padding: 4px 0 0 2px;
    background: #c8cbd0;
    border-top: 1px solid #8a8c8e;
    border-bottom: 1px solid #8a8c8e;
    position: relative;
}

.combo {
    position: relative;
    width: 99px;
    height: 21px;
    padding: 2px 4px;
    background: #fff;
    border: 1px solid #d4d4d4;
    color: #111;
}

.combo::after {
    content: "";
    position: absolute;
    right: 6px;
    top: 8px;
    border-left: 3px solid transparent;
    border-right: 3px solid transparent;
    border-top: 4px solid #555;
}

.level-meter {
    position: absolute;
    right: 10px;
    top: -27px;
    width: 8px;
    height: 57px;
    border-radius: 4px;
    background: linear-gradient(#555 68%, #2fbd4a 68%);
    z-index: 3;
}

/* panels */
.workspace {
    flex: 1;
    display: flex;
    min-height: 0;
    background: #d9dadd;
}

.panel {
    display: flex;
    flex-direction: column;
    background: #fff;
    overflow: hidden;
    border-right: 1px solid #b4b6b8;
}

.panel-strip {
    height: 11px;
    flex: none;
    padding-right: 6px;
    background: #d3d4d8;
    color: #888;
    font: bold 11px/11px "Liberation Sans", sans-serif;
    text-align: right;
}

.panel-title {
    height: 22px;
    flex: none;
    padding: 3px 8px;
    background: #efefef;
    border-top: 1px solid #c4c4c4;
    border-bottom: 1px solid #c4c4c4;
    color: #8a8a8a;
}

.nav-panel { width: 209px; margin-right: 5px; }

.nav-tools {
    display: flex;
    align-items: center;
    height: 28px;
    flex: none;
    padding-left: 8px;
    padding-right: 1px;
    gap: 4px;
    background: #fff;
    border-bottom: 1px solid #c4c4c4;
}

.sparkle { width: 12px; height: 12px; margin-right: auto; }

.tool-box {
    display: flex;
    align-items: center;
    justify-content: center;
    width: 24px;
    height: 21px;
    border: 1px solid #7db4ee;
    border-radius: 3px;
}

.tool-box svg { width: 16px; height: 14px; }

.tree-wrap {
    flex: 1;
    display: flex;
    overflow: hidden;
}

.nav-tree {
    flex: 1;
    list-style: none;
    margin: 3px 0 0;
    padding: 0;
}

.nav-tree li {
    display: flex;
    align-items: center;
    height: 24px;
    padding-left: 3px;
    color: #222;
    white-space: nowrap;
}

.fi { width: 15px; height: 13px; margin-right: 6px; }

.nav-tree .child { padding-left: 44px; }
.ci { width: 16px; height: 15px; margin-right: 6px; flex: none; }

.nav-tree .picked {
    background: linear-gradient(transparent 1px, #c6d7ee 1px, #c6d7ee 22px, transparent 22px);
    margin-left: 41px;
    margin-right: 48px;
    padding-left: 3px;
}

.vip {
    width: 30px;
    height: 10px;
    margin-left: 5px;
    background: #ffd866;
    color: #c39a2c;
    font: bold 9px/10px "Liberation Serif", serif;
    text-align: center;
}

.scroll {
    flex: none;
    width: 8px;
    border-radius: 4px;
    background: #c9c9c9;
}

.nav-scroll { height: 650px; margin: 14px 3px 0 0; }

.mid-col {
    width: 279px;
    margin-right: 5px;
    display: flex;
    flex-direction: column;
    gap: 4px;
}

.comp-panel { height: 356px; }
.prop-panel { flex: 1; min-height: 0; }
.mid-col .panel { border-left: 1px solid #b4b6b8; }

.tabs {
    display: flex;
    height: 23px;
    flex: none;
    background: #efefef;
    border-bottom: 1px solid #c4c4c4;
}

.tab {
    width: 65px;
    padding-top: 4px;
    text-align: center;
    color: #999;
    background: #e3e4e6;
    border-right: 1px solid #d0d0d0;
}

.tab.on { background: #efefef; color: #333; font-weight: 700; }

.comp-tools {
    display: flex;
    align-items: center;
    height: 28px;
    flex: none;
    padding-left: 6px;
    background: #f6f6f6;
    border-bottom: 1px solid #c4c4c4;
}

.comp-tools svg { width: 14px; height: 16px; margin-right: 5px; }
.comp-tools span { margin-right: 10px; margin-top: 1px; color: #333; white-space: nowrap; }
.comp-tools .caret { margin: 0 12px 0 -2px; }
.comp-tools .more { margin: 0 0 0 auto; padding-right: 3px; font-size: 8px; color: #444; }

.comp-search {
    display: flex;
    align-items: center;
    justify-content: space-between;
    height: 19px;
    flex: none;
    padding: 0 7px 0 3px;
    color: #a0a0a0;
    border-bottom: 1px solid #c4c4c4;
}

.comp-tree { padding: 6px 0 0 11px; }

.comp-root {
    display: flex;
    align-items: center;
    height: 18px;
    color: #333;
}

.tri {
    width: 0;
    height: 0;
    margin-right: 5px;
    border-left: 6px solid transparent;
    border-bottom: 6px solid #444;
}

.comp-leaf {
    width: 76px;
    height: 21px;
    margin: 4px 0 0 30px;
    padding: 2px 3px;
    background: #c6d7ee;
    white-space: nowrap;
}

/* shared grid */
.grid {
    border-collapse: collapse;
    table-layout: fixed;
    background: #fff;
}

.grid th, .grid td {
    height: 21px;
    padding: 0 3px;
    border: 1px solid #d4d6d8;
    font-weight: 400;
    white-space: nowrap;
    overflow: hidden;
    color: #222;
}

.grid .head th {
    background: #f0f0f0;
    color: #444;
    text-align: center;
}

.grid .head .hot {
    background: #7eb7f6;
    color: #fff;
    border: 1px solid #5ea4ee;
}

.grid .num {
    background: #f0f0f0;
    text-align: center;
    color: #444;
    padding: 0;
}

.grid .num.cur {
    background: #7eb7f6;
    color: #fff;
    font-weight: 700;
}

.grid .blue { color: #2f6fe0; }
.grid .dim { background: #ebebeb; color: #9a9a9a; }
.grid .grey { background: #ebebeb; }
.grid .ye { background: #fefecc; }
.grid .mid { text-align: center; padding: 0; }

.chk {
    display: inline-block;
    position: relative;
    width: 14px;
    height: 14px;
    vertical-align: middle;
    background: #fff;
    border: 1px solid #8f8f8f;
    border-radius: 3px;
}

.chk.on { background: #3d94ec; border-color: #3d94ec; }

.chk.on::after {
    content: "";
    position: absolute;
    left: 4px;
    top: 1px;
    width: 4px;
    height: 8px;
    border: solid #fff;
    border-width: 0 2px 2px 0;
    transform: rotate(40deg);
}

.dots {
    float: right;
    position: relative;
    width: 16px;
    height: 12px;
    margin-top: 1px;
    border: 1px solid #4a8fd6;
    border-radius: 2px;
    background: #fff;
}

.dots::before {
    content: "";
    position: absolute;
    left: 6px;
    top: 4px;
    width: 2px;
    height: 2px;
    background: #4a8fd6;
    box-shadow: 4px 0 #4a8fd6, -4px 0 #4a8fd6;
}

/* property list */
.prop-body { flex: 1; display: flex; overflow: hidden; min-height: 0; margin-top: -1px; }
.prop-grid { width: 263px; height: fit-content; flex: none; margin-left: -1px; }
.c-num { width: 23px; }
.c-name { width: 100px; }
.c-val { width: 100px; }
.c-add { width: 40px; }

.prop-grid .sub { padding-left: 31px; position: relative; }

.prop-grid .sub::before {
    content: "";
    position: absolute;
    left: 8px;
    top: 50%;
    width: 16px;
    border-top: 1px solid #ddd;
}

.prop-grid .sub::after {
    content: "";
    position: absolute;
    left: 8px;
    top: 0;
    height: 100%;
    border-left: 1px solid #ddd;
}

.fold {
    display: inline-block;
    width: 12px;
    height: 12px;
    margin-right: 6px;
    border: 1px solid #666;
    font: 10px/9px "Liberation Sans", sans-serif;
    text-align: center;
    vertical-align: -1px;
}

.prop-grid .edit { padding: 0 3px; border-right: 2px solid #4a8fd6; }
.prop-scroll { height: 233px; margin: 168px 0 0 5px; }

/* viewport */
.viewport {
    position: relative;
    flex: 1;
    overflow: hidden;
}

.scene { display: block; width: 100%; height: 100%; }

.axis-x { fill: #f00; font: 14px "Liberation Sans", sans-serif; }
.axis-y { fill: #00d870; font: 14px "Liberation Sans", sans-serif; }
.axis-z { fill: #1a2ce0; font: 14px "Liberation Sans", sans-serif; }
.axis-c { fill: #fff; font: 18px "Liberation Sans", sans-serif; }

.view-tools {
    position: absolute;
    left: 1105px;
    top: 0;
    display: flex;
    flex-direction: column;
    align-items: center;
    gap: 6px;
    width: 33px;
    height: 227px;
    padding-top: 12px;
    background: #8c9196;
}

.view-tools svg { width: 24px; height: 22px; flex: none; }
.view-tools .vt-globe { height: 20px; }
.view-tools .vt-rot { height: 21px; margin-top: 3px; }
.view-tools .vt-calc { height: 21px; }

.mode-2d {
    width: 24px;
    height: 22px;
    margin-top: 3px;
    padding: 11px 1px 0 0;
    background: #7d8ea3;
    border: 1px solid #48525b;
    color: #222;
    font: 9px/9px "Liberation Sans", sans-serif;
    text-align: right;
}

.tool-line { width: 24px; border-top: 1px solid #555; }

/* display settings */
.show-panel {
    width: 279px;
    margin-left: 0;
    margin-right: 9px;
    border-left: 4px solid #fff;
    background: #efefef;
    border-right: 1px solid #b4b6b8;
}

.show-panel .panel-title { padding-left: 5px; }

.show-tabs {
    display: flex;
    align-items: flex-end;
    gap: 3px;
    height: 29px;
    flex: none;
    background: #f4f4f4;
    border-bottom: 1px solid #c4c4c4;
}

.show-tab {
    width: 74px;
    height: 24px;
    padding-top: 4px;
    text-align: center;
    color: #8a8a8a;
    background: #e3e4e6;
    border-radius: 3px 3px 0 0;
}

.show-tab.on {
    background: #fff;
    color: #2f86e0;
    border: 1px solid #c4c4c4;
    border-bottom: 0;
    height: 25px;
    margin-bottom: -1px;
}

.show-body {
    display: flex;
    height: 742px;
    flex: none;
    overflow: hidden;
    background: #fff;
    border: 1px solid #c4c4c4;
}

.show-grid { width: 257px; height: fit-content; flex: none; }
.s-name { width: 131px; }
.s-col { width: 63px; }

.grid .head .s-head { text-align: left; padding-left: 42px; }

.show-grid .leaf { padding-left: 42px; position: relative; }

.show-grid .leaf::before {
    content: "";
    position: absolute;
    left: 18px;
    top: 50%;
    width: 18px;
    border-top: 1px solid #ddd;
}

.show-scroll { height: 243px; margin: 123px 0 0 4px; }

.show-foot {
    display: flex;
    justify-content: flex-end;
    padding: 7px 7px 0 0;
}

.reset-btn {
    width: 90px;
    height: 25px;
    padding-top: 4px;
    text-align: center;
    background: #fff;
    border: 1px solid #ccc;
    border-radius: 3px;
    color: #333;
}

/* status */
.status {
    display: flex;
    align-items: flex-end;
    height: 31px;
    flex: none;
    background: #dddde0;
    position: relative;
}

.calc-tab {
    display: flex;
    align-items: center;
    gap: 18px;
    width: 160px;
    height: 27px;
    padding-left: 6px;
    background: #2e80e0;
    color: #fff;
}

.calc-tab span { margin-right: 8px; }

.st {
    height: 27px;
    line-height: 24px;
    color: #555;
    white-space: nowrap;
}

.st-h { margin-left: 105px; width: 83px; }
.st-b { width: 136px; }
.st-0 { width: 101px; }
.st-hide { width: 102px; }
.st-hint { margin-left: 6px; color: #333; }
.st-fps { margin-left: auto; margin-right: 38px; }

.st-tools {
    display: flex;
    gap: 4px;
    height: 25px;
    margin-bottom: 2px;
}

.st-btn {
    display: flex;
    align-items: center;
    justify-content: center;
    gap: 3px;
    height: 25px;
    background: #dcdcdf;
    border: 1px solid #9c9c9c;
    color: #444;
}

.w24 { width: 24px; }
.w35 { width: 35px; }
.lit { background: #fff; border: 1px solid #4a8fd6; }
.off { background: #cfcfd2; border-color: #b4b4b4; margin: 0 3px; }
.txt { padding: 0 5px; }

.taskbar {
    display: flex;
    gap: 3px;
    height: 8px;
    flex: none;
    padding-left: 320px;
    background: linear-gradient(#5a7a70, #3f5f56);
}

.taskbar i {
    width: 159px;
    background: linear-gradient(#e4ecea, #a8bcb8);
    border-radius: 2px 2px 0 0;
}

/* dialogs */
.dialog {
    position: absolute;
    background: #efefef;
    border: 1px solid #cfcfcf;
    border-top: 0;
}

.dlg-title {
    display: flex;
    align-items: center;
    justify-content: space-between;
    height: 27px;
    margin: 0 -1px;
    padding: 0 9px;
    background: #2e80e0;
    color: #fff;
}

.dlg-title b { font: 400 18px/1 "Liberation Sans", sans-serif; }

.dlg-node {
    left: 634px;
    top: 24px;
    width: 961px;
    height: 533px;
}

.dlg-node-body {
    display: flex;
    width: 939px;
    height: 450px;
    margin: 11px 0 0 10px;
    background: #fff;
    overflow: hidden;
    border-bottom: 1px solid #c4c4c4;
}

.node-grid { width: 533px; flex: none; height: fit-content; }
.n-num { width: 22px; }
.n-name { width: 310px; }
.n-val { width: 201px; }

.grid .node-edit { color: #777; border: 2px solid #4a8fd6; }

.preview-col { flex: 1; margin-left: 3px; }

.preview-top {
    display: flex;
    justify-content: flex-end;
    height: 51px;
    padding: 14px 3px 0 0;
}

.preview-scroll { height: 37px; background: #d4d4d4; border-radius: 0; }

.preview-box {
    height: 399px;
    padding: 0 3px;
    background: #efefef;
    border-left: 1px solid #d8d8d8;
    border-top: 1px solid #d8d8d8;
}

.preview-title { height: 21px; padding: 3px 0 0 2px; color: #222; }

.preview-cad {
    display: block;
    width: 392px;
    height: 317px;
    background: #000;
}

.row-mark {
    position: absolute;
    left: 0;
    top: 201px;
    width: 551px;
    height: 32px;
    border: solid #ff3333;
    border-width: 7px 7px 7px 10px;
}

.cad-title { fill: #fff; font-size: 16px; }
.t-big { font-size: 23px; }
.t-small { font-size: 15px; }
.cad-cap { fill: #0ff; }
.cad-dim { fill: #0f0; font-family: "DejaVu Serif", serif; }
.cad-lae { fill: #fff; font: 13px "DejaVu Sans Mono", monospace; }
.cw { fill: none; stroke: #fff; stroke-width: 1; }
.cr { fill: none; stroke: #f00; stroke-width: 2; }
.cu { fill: none; stroke: #0ff; stroke-width: 3; }
.mark-box { fill: none; stroke: #ff3333; stroke-width: 6; }
.mark-arrow { fill: #ff3333; }

.dlg-pick {
    left: 1186px;
    top: 455px;
    width: 663px;
    height: 585px;
    display: flex;
    flex-direction: column;
}

.pick-frame {
    display: flex;
    width: 638px;
    height: 439px;
    margin: 12px 0 0 12px;
    padding: 1px 0 0 2px;
    background: #f0f0f0;
    border-top: 1px solid #cfcfcf;
}

.pick-grid {
    display: grid;
    grid-template-columns: 304px 304px;
    grid-template-rows: 215px 213px;
    gap: 8px;
}

.card {
    display: block;
    width: 304px;
    height: 100%;
    background: #000;
}

.picked-card { outline: 3px solid #2e80e0; outline-offset: -3px; }

.pick-scroll { height: 407px; margin: 13px 0 0 8px; }

.pick-note {
    margin: 7px 0 0 12px;
    color: #222;
    white-space: nowrap;
}

.pick-foot {
    display: flex;
    justify-content: flex-end;
    gap: 6px;
    margin: auto 12px 0;
    padding-top: 8px;
    border-top: 1px solid #cfcfcf;
}

.btn {
    width: 80px;
    height: 25px;
    background: #fff;
    border: 1px solid #d4d4d4;
    border-radius: 3px;
    font: inherit;
    color: #222;
}

.btn-ok { background: #2e80e0; border-color: #2e80e0; color: #fff; }

/* annotations */
.mark-prop {
    position: absolute;
    left: 331px;
    top: 935px;
    width: 120px;
    height: 30px;
    border: solid #ff3333;
    border-width: 7px;
    border-right-width: 14px;
}

.mark-prop-arrow {
    position: absolute;
    left: 410px;
    top: 890px;
    width: 105px;
    height: 45px;
}
```
